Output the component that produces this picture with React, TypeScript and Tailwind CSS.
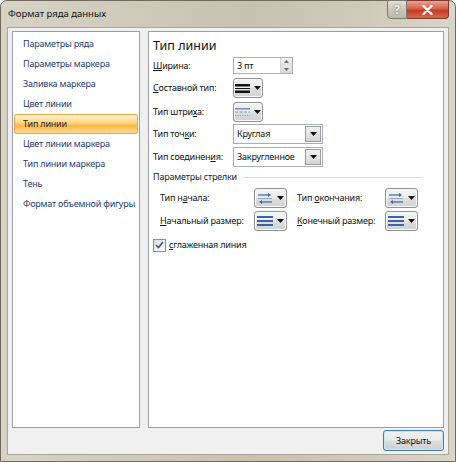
import React from "react";

function Mn({ t, i }: { t: string; i: number }) {
  return (
    <>
      {t.slice(0, i)}
      <span className="underline underline-offset-[1px]">{t[i]}</span>
      {t.slice(i + 1)}
    </>
  );
}

const Caret = () => (
  <svg width="7" height="4" viewBox="0 0 7 4">
    <path d="M0 0h7L3.5 4z" fill="#111" />
  </svg>
);

function IconBtn({ children, wide }: { children: React.ReactNode; wide?: boolean }) {
  return (
    <div
      className={
        (wide ? "w-[33px] " : "w-[30px] ") +
        "h-[20px] shrink-0 rounded-[3px] border border-[#8f9094] bg-[linear-gradient(#f4f4f4,#ececec_45%,#dedede_55%,#d2d2d2)] flex items-center justify-center gap-[4px] shadow-[inset_0_0_0_1px_#fafafa]"
      }
    >
      {children}
      <Caret />
    </div>
  );
}

const CompoundIcon = () => (
  <svg width="15" height="11" viewBox="0 0 15 11">
    <rect x="0" y="1" width="15" height="2.5" fill="#111" />
    <rect x="0" y="5" width="15" height="1" fill="#111" />
    <rect x="0" y="7.5" width="15" height="2.5" fill="#111" />
  </svg>
);

const DashIcon = () => (
  <svg width="15" height="11" viewBox="0 0 15 11">
    <rect x="0" y="1" width="15" height="1.5" fill="#6f8fbf" />
    <path d="M0 5h15" stroke="#7c98c4" strokeWidth="1.2" strokeDasharray="3 1.5" />
    <path d="M0 8.5h15" stroke="#8ca5cc" strokeWidth="1.2" strokeDasharray="1.2 1.2" />
  </svg>
);

const ArrowIcon = () => (
  <svg width="16" height="12" viewBox="0 0 16 12">
    <path d="M1 3h12" stroke="#3d66a8" strokeWidth="1.2" />
    <path d="M11 1l3 2-3 2z" fill="#3d66a8" />
    <path d="M1 6.5h14" stroke="#7d98c4" strokeWidth="0.8" />
    <path d="M3 10h12" stroke="#3d66a8" strokeWidth="1.2" />
    <path d="M5 8l-3 2 3 2z" fill="#3d66a8" />
  </svg>
);

const SizeIcon = () => (
  <svg width="16" height="12" viewBox="0 0 16 12">
    <rect x="0" y="1" width="16" height="2" fill="#3a62a6" />
    <rect x="0" y="5" width="16" height="2" fill="#3a62a6" />
    <rect x="0" y="9" width="16" height="2" fill="#3a62a6" />
  </svg>
);

function Combo({ value }: { value: string }) {
  return (
    <div className="w-[90px] h-[20px] border border-[#abadb3] bg-white flex items-stretch">
      <div className="flex-1 flex items-center pl-[3px] text-[9px] text-[#111] whitespace-nowrap">{value}</div>
      <div className="w-[16px] m-[1px] border border-[#9a9ca3] bg-[linear-gradient(#f3f3f3,#e4e4e4_50%,#d4d4d4)] flex items-center justify-center">
        <Caret />
      </div>
    </div>
  );
}

const listItems = [
  "Параметры ряда",
  "Параметры маркера",
  "Заливка маркера",
  "Цвет линии",
  "Тип линии",
  "Цвет линии маркера",
  "Тип линии маркера",
  "Тень",
  "Формат объемной фигуры",
];

export default function App() {
  return (
    <div className="w-[456px] h-[462px] flex flex-col rounded-t-[7px] border border-[#6e6a5e] bg-[linear-gradient(90deg,#d7d3c6,#cdc8b8_35%,#c7c1af_55%,#cfcabb_80%,#d9d5c9)] px-[6px] pb-[6px] font-['Noto_Sans',sans-serif] select-none whitespace-nowrap">
      {/* title bar */}
      <div className="h-[26px] flex justify-between items-start">
        <div className="pt-[6px] pl-[1px] text-[9.5px] text-[#111]">Формат ряда данных</div>
        <div className="flex -mt-[1px]">
          <div className="w-[20px] h-[19px] rounded-bl-[4px] border border-[#7d7a70] bg-[linear-gradient(#e2dfd6,#cbc7bb_50%,#bdb8aa)] flex items-center justify-center text-[12px] font-bold text-[#f4f2ec] [text-shadow:0_0_2px_#555]">
            ?
          </div>
          <div className="w-[42px] h-[19px] rounded-br-[4px] border border-l-0 border-[#7a3a30] bg-[linear-gradient(#e9a395,#d9604a_45%,#c63a24_55%,#d86a4f)] flex items-center justify-center">
            <svg width="11" height="10" viewBox="0 0 11 10">
              <path d="M1.5 1l8 8M9.5 1l-8 8" stroke="#fff" strokeWidth="2.4" strokeLinecap="round" />
            </svg>
          </div>
        </div>
      </div>

      {/* client */}
      <div className="flex-1 flex flex-col border border-[#a9a698] bg-[#f0f0f0] pt-[3px] px-[4px] pb-[3px] tracking-[-0.2px]">
        <div className="flex-1 flex gap-[8px]">
          {/* left list */}
          <div className="w-[128px] border border-[#9b9da3] bg-white pt-[2px] px-[1px]">
            {listItems.map((it) =>
              it === "Тип линии" ? (
                <div
                  key={it}
                  className="h-[20px] flex items-center pl-[8px] text-[9px] text-[#1f1f1f] border border-[#e7a849] rounded-[2px] bg-[linear-gradient(#fff3cc,#fdd98c_40%,#fbb746_60%,#fdd995)]"
                >
                  {it}
                </div>
              ) : (
                <div key={it} className="h-[20px] flex items-center pl-[9px] text-[9px] text-[#1f3a73]">
                  {it}
                </div>
              )
            )}
          </div>

          {/* right panel */}
          <div className="flex-1 border border-[#9b9da3] bg-white pl-[4px] pr-[20px] flex flex-col text-[9px] text-[#111]">
            <div className="mt-[4px] h-[20px] flex items-center text-[12.5px] tracking-normal text-[#111]">Тип линии</div>

            <div className="mt-[1px] h-[17px] flex items-center">
              <div className="w-[80px]">
                <Mn t="Ширина:" i={0} />
              </div>
              <div className="w-[60px] h-[17px] border border-[#abadb3] bg-white flex">
                <div className="flex-1 flex items-center pl-[3px]">3 пт</div>
                <div className="w-[12px] flex flex-col border-l border-[#d0d2d6]">
                  <div className="flex-1 flex items-center justify-center bg-[linear-gradient(#f3f3f3,#e2e2e2)]">
                    <svg width="5" height="3" viewBox="0 0 5 3">
                      <path d="M0 3h5L2.5 0z" fill="#6a6a6a" />
                    </svg>
                  </div>
                  <div className="flex-1 flex items-center justify-center bg-[linear-gradient(#e8e8e8,#dadada)]">
                    <svg width="5" height="3" viewBox="0 0 5 3">
                      <path d="M0 0h5L2.5 3z" fill="#6a6a6a" />
                    </svg>
                  </div>
                </div>
              </div>
            </div>

            <div className="mt-[4px] h-[20px] flex items-center">
              <div className="w-[80px]">
                <Mn t="Составной тип:" i={0} />
              </div>
              <IconBtn>
                <CompoundIcon />
              </IconBtn>
            </div>

            <div className="mt-[4px] h-[20px] flex items-center">
              <div className="w-[80px]">
                <Mn t="Тип штриха:" i={8} />
              </div>
              <IconBtn>
                <DashIcon />
              </IconBtn>
            </div>

            <div className="mt-[2px] h-[20px] flex items-center">
              <div className="w-[80px]">
                <Mn t="Тип точки:" i={7} />
              </div>
              <Combo value="Круглая" />
            </div>

            <div className="mt-[3px] h-[20px] flex items-center">
              <div className="w-[80px]">
                <Mn t="Тип соединения:" i={12} />
              </div>
              <Combo value="Закругленное" />
            </div>

            <div className="mt-[3px] h-[14px] flex items-center gap-[6px]">
              <span className="text-[#1e1e1e]">Параметры стрелки</span>
              <div className="flex-1 h-px bg-[#d5dbe3]" />
            </div>

            <div className="mt-[4px] h-[20px] flex items-center pl-[7px]">
              <div className="w-[94px]">
                <Mn t="Тип начала:" i={5} />
              </div>
              <IconBtn wide>
                <ArrowIcon />
              </IconBtn>
              <div className="w-[88px] ml-[10px]">
                <Mn t="Тип окончания:" i={4} />
              </div>
              <IconBtn wide>
                <ArrowIcon />
              </IconBtn>
            </div>

            <div className="mt-[3px] h-[20px] flex items-center pl-[7px]">
              <div className="w-[94px]">
                <Mn t="Начальный размер:" i={0} />
              </div>
              <IconBtn wide>
                <SizeIcon />
              </IconBtn>
              <div className="w-[88px] ml-[10px]">
                <Mn t="Конечный размер:" i={0} />
              </div>
              <IconBtn wide>
                <SizeIcon />
              </IconBtn>
            </div>

            <div className="mt-[7px] h-[14px] flex items-center gap-[3px]">
              <div className="w-[13px] h-[13px] border border-[#8e8f8f] bg-[linear-gradient(135deg,#dcdcdc,#ffffff)] flex items-center justify-center">
                <svg width="9" height="8" viewBox="0 0 9 8">
                  <path d="M1 4l2.5 2.5L8 1" stroke="#3f5b8c" strokeWidth="1.6" fill="none" />
                </svg>
              </div>
              <span>
                <Mn t="сглаженная линия" i={0} />
              </span>
            </div>
          </div>
        </div>

        {/* footer */}
        <div className="mt-[2px] h-[21px] flex justify-end">
          <div className="w-[61px] h-[21px] rounded-[3px] border border-[#3c7fb1] bg-[linear-gradient(#f2f2f2,#ebebeb_45%,#dddddd_55%,#cfcfcf)] shadow-[inset_0_0_0_1px_#c6e6f7] flex items-center justify-center text-[9px] text-[#111]">
            Закрыть
          </div>
        </div>
      </div>
    </div>
  );
}
